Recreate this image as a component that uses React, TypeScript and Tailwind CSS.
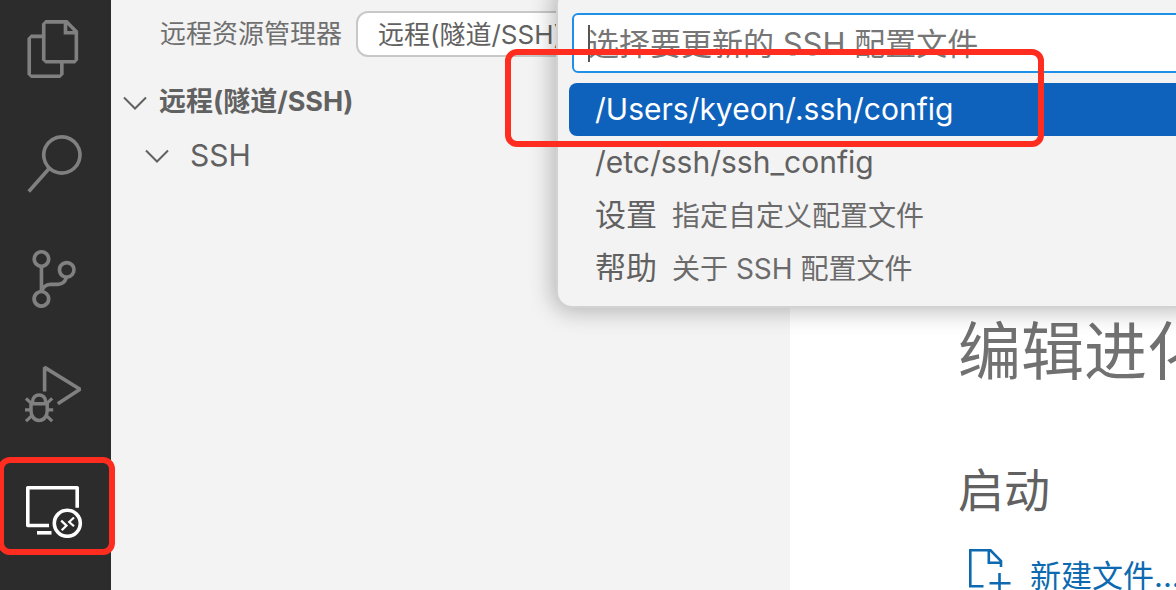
import type { ReactNode } from "react";

function Glyph({ children }: { children: ReactNode }) {
  return (
    <svg viewBox="0 0 58 58" className="size-[58px]" fill="none" stroke="currentColor" strokeWidth="3.6" aria-hidden="true">
      {children}
    </svg>
  );
}

function SolidGlyph({ d }: { d: string }) {
  return (
    <svg viewBox="0 0 24 24" className="size-[58px]" fill="currentColor" aria-hidden="true">
      <path d={d} />
    </svg>
  );
}

const FILES =
  "M17.5 0h-9L7 1.5V6H2.5L1 7.5v15.07L2.5 24h12.07L16 22.57V18h4.7l1.3-1.43V4.5L17.5 0zm0 2.12l2.38 2.38H17.5V2.12zm-3 20.38h-12v-15H7v9.07L8.5 18h6v4.5zm6-6h-12v-15H16V6h4.5v10.5z";
const SEARCH =
  "M15.25 0a8.25 8.25 0 0 0-6.18 13.72L1 22.88l1.12 1 8.05-9.12A8.251 8.251 0 1 0 15.25.01V0zm0 15a6.75 6.75 0 1 1 0-13.5 6.75 6.75 0 0 1 0 13.5z";
const BRANCH =
  "M21.007 8.222A3.738 3.738 0 0 0 15.045 5.2a3.737 3.737 0 0 0 1.156 6.583 2.988 2.988 0 0 1-2.668 1.67h-2.99a4.456 4.456 0 0 0-2.989 1.165V7.4a3.737 3.737 0 1 0-1.494 0v9.117a3.776 3.776 0 1 0 1.816.099 2.99 2.99 0 0 1 2.668-1.667h2.99a4.484 4.484 0 0 0 4.223-3.039 3.736 3.736 0 0 0 3.25-3.687zM4.565 3.738a2.242 2.242 0 1 1 4.484 0 2.242 2.242 0 0 1-4.484 0zm4.484 16.441a2.242 2.242 0 1 1-4.484 0 2.242 2.242 0 0 1 4.484 0zm8.221-9.715a2.242 2.242 0 1 1 0-4.485 2.242 2.242 0 0 1 0 4.485z";

function DebugIcon() {
  return (
    <Glyph>
      <path d="M19.6 26.5V2.4L55 24.2 32.8 38.8" strokeLinejoin="bevel" />
      <path d="M7.6 38.4v-2a6.5 6.5 0 0 1 13 0v2M5.8 38.8h16.8M6 38.8V46c0 5.5 3.6 9.4 8.1 9.4s8.1-3.9 8.1-9.4v-7.2" strokeWidth="3.5" />
      <path d="M0 44.8h5M23.2 44.8h5M1 33.4l5.6 5.2M27.2 33.4l-5.6 5.200M1 56.200l6.400-6M27.200 56.200l-6.400-6" strokeWidth="3.2" />
    </Glyph>
  );
}

function RemoteIcon() {
  return (
    <Glyph>
      <path d="M52.2 27.8V7.7H2.8v37.800H24" strokeLinejoin="round" />
      <path d="M12 52.800h14.500" />
      <circle cx="42.300" cy="43.300" r="13" />
      <path d="M36.200 40.600l5.300 5-4.800 4.700M49 37.500l-4.800 4.500 4.800 4.300" strokeWidth="2.200" />
    </Glyph>
  );
}

function Chevron() {
  return (
    <svg viewBox="0 0 24 14" className="h-[14px] w-6 shrink-0" fill="none" stroke="currentColor" strokeWidth="2" aria-hidden="true">
      <path d="M1 1.500l11 11 11-11" />
    </svg>
  );
}

function NewFileIcon() {
  return (
    <svg viewBox="0 0 44 44" className="size-11 shrink-0" fill="none" stroke="currentColor" strokeWidth="2.600" aria-hidden="true">
      <path d="M15.500 38.200H2.300V2.300h20.200L33 13v6M20.800 2.300v12.500H34" />
      <path d="M31.500 25v19M21.500 35.200h21" />
    </svg>
  );
}

const activities = [
  { label: "资源管理器", icon: <SolidGlyph d={FILES} /> },
  { label: "搜索", icon: <SolidGlyph d={SEARCH} /> },
  { label: "源代码管理", icon: <SolidGlyph d={BRANCH} /> },
  { label: "运行和调试", icon: <DebugIcon /> },
  { label: "远程资源管理器", icon: <RemoteIcon />, active: true },
];

const options = [
  { label: "/Users/kyeon/.ssh/config", selected: true },
  { label: "/etc/ssh/ssh_config" },
  { label: "设置", detail: "指定自定义配置文件" },
  { label: "帮助", detail: "关于 SSH 配置文件" },
];

function ActivityBar() {
  return (
    <nav className="w-[111px] shrink-0 bg-[#2c2c2c]">
      <div className="-mt-[9px] flex flex-col">
        {activities.map((a) => (
          <button
            key={a.label}
            type="button"
            aria-label={a.label}
            className={`flex h-[115px] items-center justify-center pr-[3px] ${a.active ? "text-white" : "text-[#808080]"}`}
          >
            {a.icon}
          </button>
        ))}
      </div>
    </nav>
  );
}

function Sidebar() {
  return (
    <aside className="w-[679px] shrink-0 bg-[#f3f3f3] text-[#616161]">
      <header className="flex items-center gap-[14px] pt-[11px] pl-[49px]">
        <h2 className="text-[26px] leading-[46px] whitespace-nowrap text-[#6f6f6f]">远程资源管理器</h2>
        <select
          aria-label="远程类型"
          className="h-[46px] w-[260px] appearance-none rounded-xl border-2 border-[#c8c8c8] bg-white pl-5 text-[26px]"
        >
          <option>远程(隧道/SSH)</option>
        </select>
      </header>
      <button type="button" className="mt-[19px] flex h-[53px] items-center gap-3 pl-3 text-[27px] font-bold">
        <Chevron />
        远程(隧道/SSH)
      </button>
      <button type="button" className="flex h-[53px] items-center gap-[21px] pl-[34px] text-[30px]">
        <Chevron />
        SSH
      </button>
    </aside>
  );
}

function Welcome() {
  return (
    <main className="min-w-0 flex-1 overflow-hidden bg-white pt-[304px] pl-[168px] whitespace-nowrap">
      <h1 className="text-[63px] leading-[94px] text-[#717171]">编辑进化</h1>
      <h2 className="mt-[58px] text-[46px] leading-[68px] text-[#616161]">启动</h2>
      <a href="#new-file" className="mt-6 flex items-start gap-[18px] pl-[10px] text-[31px] leading-[56px] text-[#0d6ab0]">
        <NewFileIcon />
        新建文件...
      </a>
    </main>
  );
}

function QuickPick() {
  return (
    <section
      aria-label="SSH 配置文件"
      className="absolute -top-3 -right-6 left-[556px] rounded-[16px] border-2 border-[#d2d2d2] bg-[#f3f3f3] pt-[23px] pb-[11px] pl-[11px] shadow-[0_0_22px_4px_rgba(0,0,0,0.25)]"
    >
      <div className="relative pl-[3px]">
        <input
          type="text"
          aria-label="选择配置文件"
          placeholder="选择要更新的 SSH 配置文件"
          className="h-[60px] w-full rounded-md border-2 border-[#1f90e8] bg-white pl-[14px] text-[31px] outline-none placeholder:text-[#767676]"
        />
        <span className="absolute top-3 left-[19px] h-[37px] w-[2px] bg-[#555555]" />
      </div>
      <ul role="listbox" aria-label="配置文件" className="mt-[10px]">
        {options.map((o) => (
          <li
            key={o.label}
            role="option"
            aria-selected={!!o.selected}
            className={`flex h-[53px] items-center gap-[15px] rounded-lg pl-[26px] whitespace-nowrap ${o.selected ? "bg-[#0f62bc] text-white" : "text-[#616161]"} ${o.detail ? "text-[31px]" : "text-[30px]"}`}
          >
            {o.label}
            {o.detail && <span className="text-[28px] text-[#6b6b6b]">{o.detail}</span>}
          </li>
        ))}
      </ul>
    </section>
  );
}

export default function App() {
  return (
    <div className="relative flex h-screen overflow-hidden font-['Inter','Noto_Sans_CJK_SC',sans-serif]">
      <ActivityBar />
      <Sidebar />
      <Welcome />
      <QuickPick />
      <div className="pointer-events-none absolute top-[457px] -left-[2px] h-[98px] w-[117px] rounded-xl border-[6px] border-[#ff2d1f]" />
      <div className="pointer-events-none absolute top-[49px] left-[505px] h-[98px] w-[539px] rounded-xl border-[6px] border-[#ff2d1f]" />
    </div>
  );
}
